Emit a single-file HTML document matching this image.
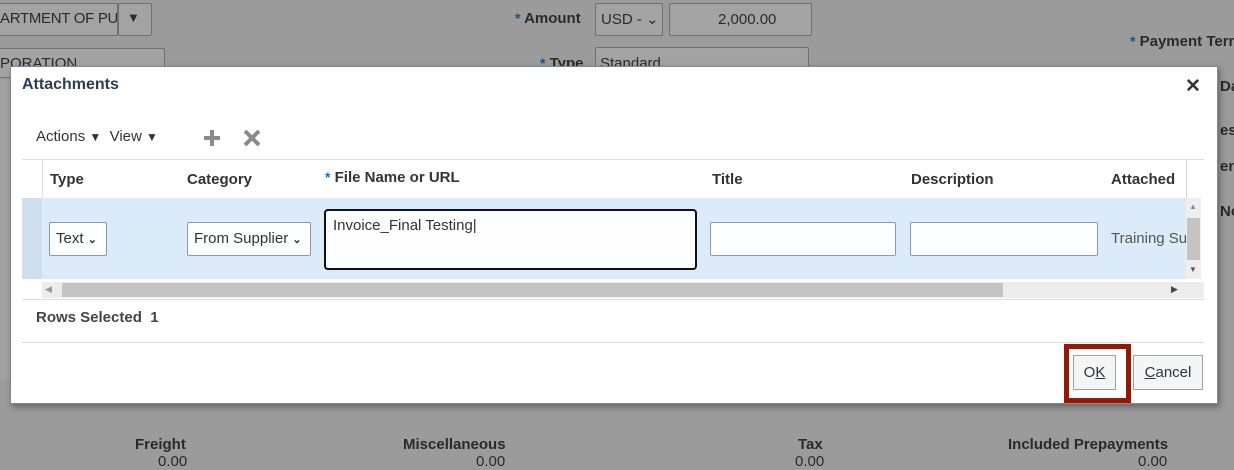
<!DOCTYPE html>
<html><head><meta charset="utf-8"><style>
*{box-sizing:border-box;margin:0;padding:0}
body{width:1234px;height:461px;overflow:hidden;background:#9b9b9b;font-family:"Liberation Sans",Arial,sans-serif;position:relative;color:#333}
.a{position:absolute;white-space:nowrap}
.bg{color:#2a2a2a;font-size:15px}
.bx{position:absolute;border:1px solid #6f6f6f;background:#a3a3a3;border-radius:2px}
.dlg{position:absolute;left:10px;top:66px;width:1208px;height:338px;background:#fff;border:1px solid #7c8a96;box-shadow:2px 3px 6px rgba(0,0,0,.35)}
.h{font-weight:bold;font-size:15px;color:#333}
.inp{position:absolute;border:1px solid #8d9aa5;background:#fbfdff;border-radius:2px;font-size:15px;color:#333;padding:7px 6px}
.star{color:#1e6fb8;font-size:14px;vertical-align:top}
</style></head><body>
<div class="bx" style="left:-4px;top:3px;width:122px;height:33px"></div>
<div class="a bg" style="left:0;top:10px;font-size:15px;letter-spacing:-0.3px;width:117px;overflow:hidden">ARTMENT OF PU</div>
<div class="bx" style="left:118px;top:3px;width:34px;height:33px"></div>
<div class="a bg" style="left:127px;top:10px;font-size:13px">▼</div>
<div class="bx" style="left:-4px;top:48px;width:169px;height:30px"></div>
<div class="a bg" style="left:0;top:55px">PORATION</div>
<div class="a bg" style="left:515px;top:10px;font-weight:bold"><span class="star" style="color:#1a4f80">*</span> Amount</div>
<div class="bx" style="left:595px;top:3px;width:68px;height:33px"></div>
<div class="a bg" style="left:601px;top:10px">USD - ⌄</div>
<div class="bx" style="left:669px;top:3px;width:143px;height:33px"></div>
<div class="a bg" style="left:718px;top:11px">2,000.00</div>
<div class="a bg" style="left:540px;top:55px;font-weight:bold"><span class="star" style="color:#1a4f80">*</span> Type</div>
<div class="bx" style="left:595px;top:47px;width:214px;height:30px"></div>
<div class="a bg" style="left:600px;top:55px">Standard</div>
<div class="a bg" style="left:1130px;top:33px;font-weight:bold"><span class="star" style="color:#1a4f80">*</span> Payment Terms</div>
<div class="a bg" style="left:1220px;top:78px;font-weight:bold">Da</div>
<div class="a bg" style="left:1220px;top:122px;font-weight:bold">es</div>
<div class="a bg" style="left:1220px;top:158px;font-weight:bold">en</div>
<div class="a bg" style="left:1220px;top:203px;font-weight:bold">No</div>
<div class="a bg" style="left:135px;top:436px;font-weight:bold">Freight</div>
<div class="a bg" style="left:158px;top:453px">0.00</div>
<div class="a bg" style="left:403px;top:436px;font-weight:bold">Miscellaneous</div>
<div class="a bg" style="left:476px;top:453px">0.00</div>
<div class="a bg" style="left:798px;top:436px;font-weight:bold">Tax</div>
<div class="a bg" style="left:795px;top:453px">0.00</div>
<div class="a bg" style="left:1008px;top:436px;font-weight:bold">Included Prepayments</div>
<div class="a bg" style="left:1138px;top:453px">0.00</div>
<div style="position:absolute;left:0;top:80px;width:10px;height:300px;background:#a1a1a1"></div>

<div class="dlg"></div>
<div class="a" style="left:22px;top:76px;font-size:16px;font-weight:bold;color:#2c3e50">Attachments</div>
<div class="a" style="left:1185px;top:75px;font-size:19px;font-weight:bold;color:#333">✕</div>
<div class="a" style="left:36px;top:128px;font-size:15px;color:#333">Actions <span style="font-size:12px">▼</span>&nbsp; View <span style="font-size:12px">▼</span></div>
<svg class="a" style="left:202px;top:128px" width="60" height="20"><path d="M10 2v16M2 10h16" stroke="#8a8a8a" stroke-width="4"/><path d="M43 3l14 14M57 3l-14 14" stroke="#8a8a8a" stroke-width="4"/></svg>
<div class="a" style="left:22px;top:159px;width:1182px;height:1px;background:#dcdcdc"></div>
<div class="a" style="left:42px;top:160px;width:1px;height:38px;background:#e0e0e0"></div>
<div class="a" style="left:1186px;top:160px;width:1px;height:38px;background:#d5d5d5"></div>
<div class="a h" style="left:50px;top:171px">Type</div>
<div class="a h" style="left:187px;top:171px">Category</div>
<div class="a h" style="left:325px;top:169px"><span class="star">*</span> File Name or URL</div>
<div class="a h" style="left:712px;top:171px">Title</div>
<div class="a h" style="left:911px;top:171px">Description</div>
<div class="a h" style="left:1111px;top:171px">Attached</div>
<div class="a" style="left:22px;top:198px;width:1164px;height:81px;background:#dbebf9"></div>
<div class="a" style="left:22px;top:198px;width:20px;height:81px;background:#d0dfec"></div>
<div class="inp" style="left:49px;top:222px;width:58px;height:34px">Text <span style="font-size:11px;font-weight:bold">⌄</span></div>
<div class="inp" style="left:187px;top:222px;width:124px;height:34px">From Supplier <span style="font-size:11px;font-weight:bold">⌄</span></div>
<div class="inp" style="left:324px;top:209px;width:373px;height:61px;border:2px solid #111;border-radius:4px;padding:6px 7px;font-size:15px">Invoice_Final Testing|</div>
<div class="inp" style="left:710px;top:222px;width:186px;height:34px"></div>
<div class="inp" style="left:910px;top:222px;width:188px;height:34px"></div>
<div class="a" style="left:1111px;top:230px;font-size:15px;color:#555;width:75px;overflow:hidden">Training Su</div>
<div class="a" style="left:1186px;top:198px;width:15px;height:81px;background:#eee"></div>
<div class="a" style="left:1187px;top:218px;width:13px;height:42px;background:#c3c3c3"></div>
<div class="a" style="left:1189px;top:202px;font-size:8px;color:#888">▲</div>
<div class="a" style="left:1189px;top:265px;font-size:8px;color:#555">▼</div>
<div class="a" style="left:42px;top:282px;width:1162px;height:16px;background:#ececec"></div>
<div class="a" style="left:62px;top:283px;width:941px;height:14px;background:#c4c4c4"></div>
<div class="a" style="left:45px;top:284px;font-size:9px;color:#999">◀</div>
<div class="a" style="left:1171px;top:284px;font-size:9px;color:#444">▶</div>
<div class="a" style="left:22px;top:299px;width:1182px;height:1px;background:#dcdcdc"></div>
<div class="a" style="left:36px;top:309px;font-size:15px;font-weight:bold;color:#444">Rows Selected&nbsp; 1</div>
<div class="a" style="left:22px;top:342px;width:1182px;height:1px;background:#dcdcdc"></div>
<div class="a" style="left:1064px;top:344px;width:67px;height:59px;border:5px solid #8b1c0c"></div>
<div class="a" style="left:1073px;top:355px;width:43px;height:35px;border:1px solid #9aa4ad;background:#f3f5f7;font-size:15px;text-align:center;line-height:33px;color:#333">O<u>K</u></div>
<div class="a" style="left:1133px;top:355px;width:70px;height:35px;border:1px solid #9aa4ad;background:#f3f5f7;font-size:15px;text-align:center;line-height:33px;color:#333"><u>C</u>ancel</div>
</body></html>
